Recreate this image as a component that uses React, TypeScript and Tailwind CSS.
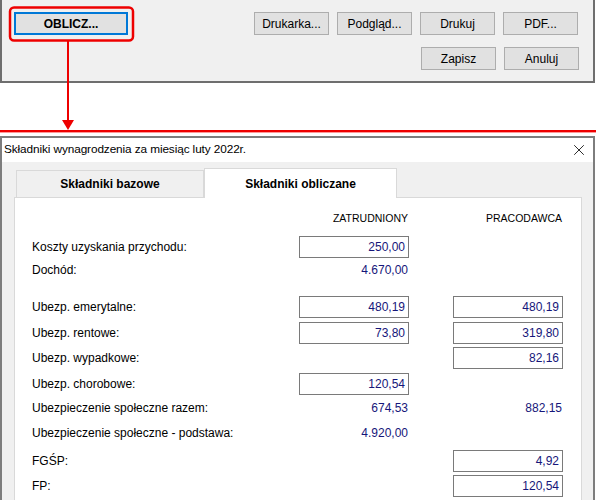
import { X } from 'lucide-react';

type Row = {
  label: string;
  emp?: string;
  empBox?: boolean;
  pay?: string;
  payBox?: boolean;
  mt: string;
};

const rows: Row[] = [
  { label: 'Koszty uzyskania przychodu:', emp: '250,00', empBox: true, mt: 'mt-[11px]' },
  { label: 'Dochód:', emp: '4.670,00', mt: 'mt-[1px]' },
  { label: 'Ubezp. emerytalne:', emp: '480,19', empBox: true, pay: '480,19', payBox: true, mt: 'mt-[15px]' },
  { label: 'Ubezp. rentowe:', emp: '73,80', empBox: true, pay: '319,80', payBox: true, mt: 'mt-[4px]' },
  { label: 'Ubezp. wypadkowe:', pay: '82,16', payBox: true, mt: 'mt-[3px]' },
  { label: 'Ubezp. chorobowe:', emp: '120,54', empBox: true, mt: 'mt-[4px]' },
  { label: 'Ubezpieczenie społeczne razem:', emp: '674,53', pay: '882,15', mt: 'mt-[2px]' },
  { label: 'Ubezpieczenie społeczne - podstawa:', emp: '4.920,00', mt: 'mt-[3px]' },
  { label: 'FGŚP:', pay: '4,92', payBox: true, mt: 'mt-[6px]' },
  { label: 'FP:', pay: '120,54', payBox: true, mt: 'mt-[3px]' },
];

const Value = ({ value, box }: { value?: string; box?: boolean }) => {
  if (!value) return <div />;
  return (
    <div
      className={`h-[22px] flex items-center justify-end text-[#16167a] ${
        box ? 'border border-[#7a7a7a] bg-white pr-[3px]' : 'pr-[1px]'
      }`}
    >
      {value}
    </div>
  );
};

const Btn = ({ children }: { children: React.ReactNode }) => (
  <button className="w-[75px] h-[23px] border border-[#adadad] bg-[#e1e1e1] text-[12px] text-black">
    {children}
  </button>
);

export default function App() {
  return (
    <div className="relative w-[596px] h-[500px] overflow-hidden bg-white text-[12px] text-black font-['Liberation_Sans',Arial,sans-serif]">
      {/* Button panel */}
      <div className="w-[595px] h-[83px] bg-[#f0f0f0] border-l-2 border-r-2 border-b-2 border-[#6e6e6e] pt-[12px] flex flex-col gap-[12px]">
        <div className="flex items-center pl-[12px]">
          <button className="w-[114px] h-[23px] border-2 border-[#0078d7] bg-[#e1e1e1] font-bold text-[12px]">
            OBLICZ...
          </button>
          <div className="ml-[126px] flex gap-[8px]">
            <Btn>Drukarka...</Btn>
            <Btn>Podgląd...</Btn>
            <Btn>Drukuj</Btn>
            <Btn>PDF...</Btn>
          </div>
        </div>
        <div className="flex justify-end gap-[8px] pr-[14px]">
          <Btn>Zapisz</Btn>
          <Btn>Anuluj</Btn>
        </div>
      </div>

      {/* Dialog */}
      <div className="mt-[53px] w-[595px] border-2 border-[#7d7d7d]">
        <div className="h-[24px] bg-white flex items-center justify-between pl-[2px] pr-[5px]">
          <span className="text-[11.8px] tracking-[-0.1px]">Składniki wynagrodzenia za miesiąc luty 2022r.</span>
          <X className="w-[18px] h-[18px]" strokeWidth={1.1} />
        </div>
        <div className="bg-[#f0f0f0] pl-[12px] pr-[11px] pt-[6px] pb-[20px]">
          {/* Tabs */}
          <div className="flex items-end h-[29px]">
            <div className="ml-[2px] w-[188px] h-[27px] border border-b-0 border-[#d9d9d9] bg-[#f0f0f0] flex items-center justify-center font-bold">
              Składniki bazowe
            </div>
            <div className="relative z-10 -mb-px w-[193px] h-[30px] border border-b-0 border-[#d9d9d9] bg-white flex items-center justify-center font-bold">
              Składniki obliczane
            </div>
          </div>
          {/* Panel */}
          <div className="w-[568px] h-[320px] bg-white border border-[#d9d9d9] pt-[13px] pl-[17px]">
            <div className="grid grid-cols-[267px_110px_44px_110px] leading-[14px] text-[10.5px]">
              <div />
              <div className="text-right pr-[1px]">ZATRUDNIONY</div>
              <div />
              <div className="text-right pr-[1px]">PRACODAWCA</div>
            </div>
            {rows.map((r) => (
              <div
                key={r.label}
                className={`grid grid-cols-[267px_110px_44px_110px] h-[22px] items-center ${r.mt}`}
              >
                <div>{r.label}</div>
                <Value value={r.emp} box={r.empBox} />
                <div />
                <Value value={r.pay} box={r.payBox} />
              </div>
            ))}
          </div>
        </div>
      </div>

      {/* Annotation overlay */}
      <svg className="absolute inset-0 pointer-events-none" width="596" height="500">
        <rect x="10" y="7.5" width="123" height="33" rx="4" fill="none" stroke="#ee0000" strokeWidth="2.5" />
        <line x1="68" y1="41" x2="68" y2="122" stroke="#ee0000" strokeWidth="2" />
        <polygon points="62,120 74,120 68,130" fill="#ee0000" />
        <line x1="0" y1="131" x2="596" y2="131" stroke="#ee0000" strokeWidth="2" />
        <line x1="0" y1="132.5" x2="596" y2="132.5" stroke="#ff9999" strokeWidth="1" />
      </svg>
    </div>
  );
}
